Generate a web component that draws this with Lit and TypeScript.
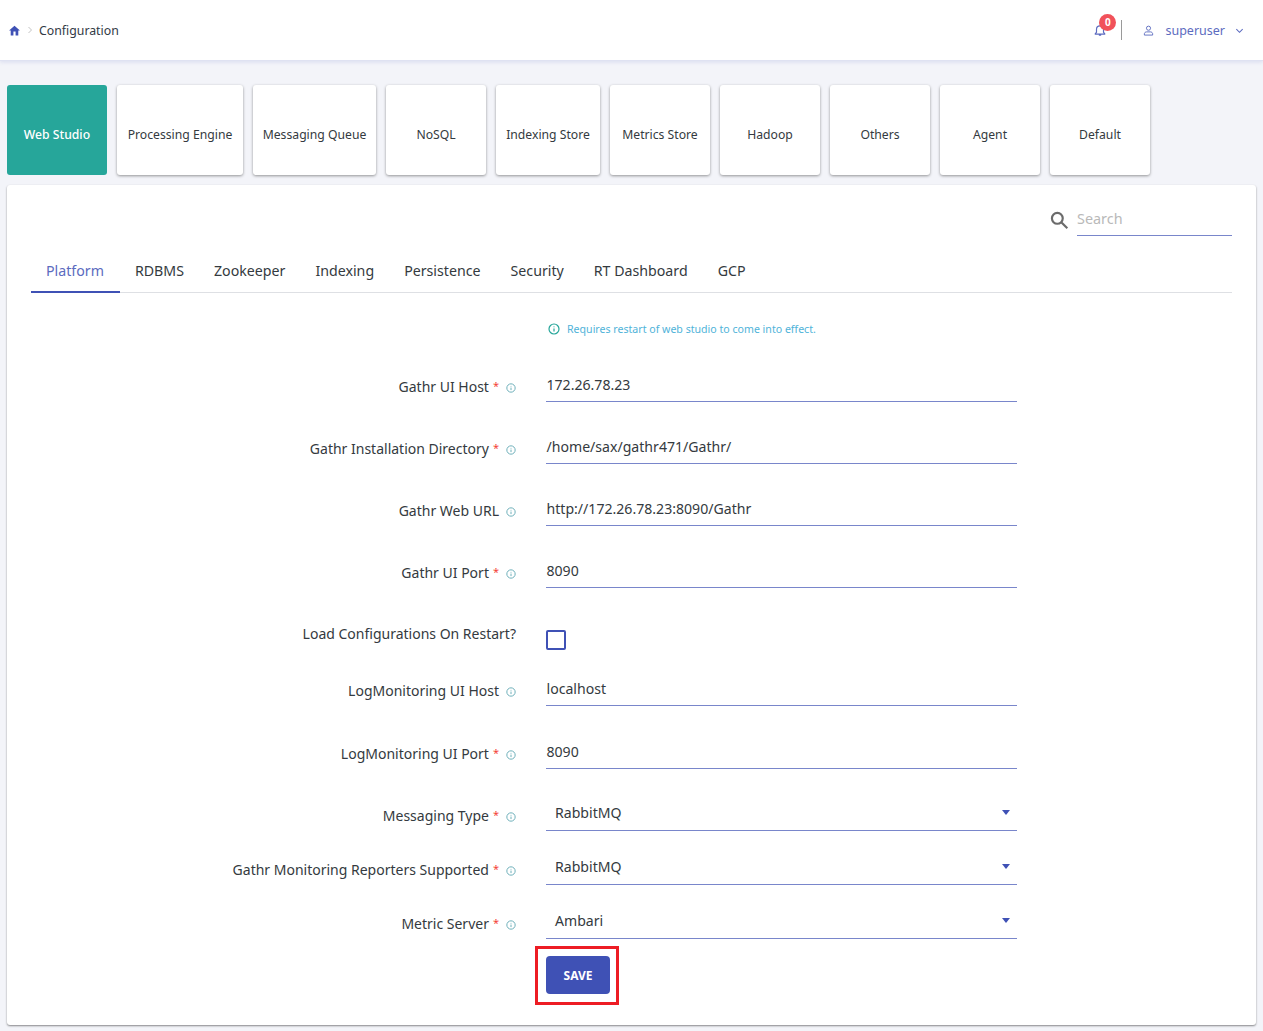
import { LitElement, css, html, nothing } from 'lit';
import { customElement } from 'lit/decorators.js';

const CATEGORIES = ['Web Studio', 'Processing Engine', 'Messaging Queue', 'NoSQL', 'Indexing Store', 'Metrics Store', 'Hadoop', 'Others', 'Agent', 'Default'];
const TABS = ['Platform', 'RDBMS', 'Zookeeper', 'Indexing', 'Persistence', 'Security', 'RT Dashboard', 'GCP'];

type Field = { label: string; value?: string; required?: boolean; kind: 'text' | 'select' | 'check'; info?: boolean };

const FIELDS: Field[] = [
  { label: 'Gathr UI Host', value: '172.26.78.23', required: true, kind: 'text', info: true },
  { label: 'Gathr Installation Directory', value: '/home/sax/gathr471/Gathr/', required: true, kind: 'text', info: true },
  { label: 'Gathr Web URL', value: 'http://172.26.78.23:8090/Gathr', kind: 'text', info: true },
  { label: 'Gathr UI Port', value: '8090', required: true, kind: 'text', info: true },
  { label: 'Load Configurations On Restart?', kind: 'check' },
  { label: 'LogMonitoring UI Host', value: 'localhost', kind: 'text', info: true },
  { label: 'LogMonitoring UI Port', value: '8090', required: true, kind: 'text', info: true },
  { label: 'Messaging Type', value: 'RabbitMQ', required: true, kind: 'select', info: true },
  { label: 'Gathr Monitoring Reporters Supported', value: 'RabbitMQ', required: true, kind: 'select', info: true },
  { label: 'Metric Server', value: 'Ambari', required: true, kind: 'select', info: true },
];

const infoIcon = (size: number) => html`<svg width=${size} height=${size} viewBox="0 0 24 24" fill="none" stroke="currentColor" stroke-width="2.4">
  <circle cx="12" cy="12" r="10"></circle>
  <path d="M12 11v6M12 7v1.6"></path>
</svg>`;

@customElement('app-root')
export class AppRoot extends LitElement {
  static styles = css`
    :host {
      display: block;
      min-height: 1031px;
      background: #f3f4f9;
      font-family: 'Noto Sans', sans-serif;
      color: #343a40;
    }
    header {
      height: 61px;
      box-sizing: border-box;
      background: #fff;
      border-bottom: 1px solid #dfe2f2;
      box-shadow: 0 1px 4px rgba(63, 81, 181, 0.15);
      display: flex;
      align-items: center;
      padding: 0 19px 0 8px;
    }
    .crumbs {
      display: flex;
      align-items: center;
      font-size: 12.3px;
      color: #323a46;
    }
    .home {
      color: #3f51b5;
      display: block;
    }
    .sep {
      color: #c4c4c4;
      display: block;
      margin: 0 6px 0 6px;
    }
    .user {
      margin-left: auto;
      display: flex;
      align-items: center;
      color: #5c6bc0;
      font-size: 12.5px;
    }
    .bell {
      position: relative;
      display: block;
      color: #5c6bc0;
      width: 14px;
      height: 14px;
    }
    .badge {
      position: absolute;
      left: 6px;
      top: -9px;
      width: 17px;
      height: 17px;
      border-radius: 50%;
      background: #f1515a;
      color: #fff;
      font-size: 10px;
      font-weight: 700;
      line-height: 17px;
      text-align: center;
    }
    .divider {
      width: 1px;
      height: 20px;
      background: #9a9a9a;
      margin: 0 21px 0 14px;
    }
    .username {
      margin: 0 10px 0 11px;
    }
    .cats {
      display: grid;
      grid-template-columns: 100px 126px 123px 100px 104px repeat(5, 100px);
      gap: 10px;
      padding: 24px 0 10px 7px;
    }
    .cat {
      height: 90px;
      box-sizing: border-box;
      padding-top: 8px;
      background: #fff;
      border-radius: 3px;
      box-shadow: 0 1px 3px rgba(0, 0, 0, 0.4);
      display: flex;
      align-items: center;
      justify-content: center;
      font-size: 12.2px;
      color: #343a40;
      white-space: nowrap;
    }
    .cat.active {
      background: #26a69a;
      color: #fff;
      box-shadow: none;
      font-weight: 500;
    }
    .panel {
      margin: 0 7px;
      height: 840px;
      box-sizing: border-box;
      background: #fff;
      border-radius: 3px;
      box-shadow: 0 1px 2px rgba(0, 0, 0, 0.45);
      padding: 0 24px;
    }
    .search {
      display: flex;
      justify-content: flex-end;
      align-items: flex-end;
      height: 51px;
      gap: 8px;
    }
    .search svg {
      display: block;
      color: #6b6b6b;
      margin-bottom: 6px;
    }
    .search-box {
      width: 155px;
      height: 34px;
      box-sizing: border-box;
      border-bottom: 1px solid #7986cb;
      color: #b9b9b9;
      font-size: 14.4px;
      line-height: 33px;
    }
    .tabs {
      display: flex;
      margin-top: 15px;
      border-bottom: 1px solid #dee0e4;
    }
    .tab {
      height: 42px;
      box-sizing: border-box;
      padding: 0 15px;
      font-size: 14.2px;
      line-height: 39px;
      color: #343a40;
      white-space: nowrap;
      margin-bottom: -1px;
    }
    .tab.active {
      padding-right: 16px;
      color: #5c6bc0;
      border-bottom: 2px solid #3f51b5;
    }
    .note {
      display: flex;
      align-items: center;
      gap: 7px;
      margin: 27px 0 0 517px;
      height: 18px;
      font-size: 10.6px;
      color: #4fb3d9;
    }
    .note svg {
      display: block;
      color: #26a69a;
    }
    .form {
      margin-top: 2px;
    }
    .row {
      display: grid;
      grid-template-columns: 485px 471px;
      column-gap: 30px;
      align-items: end;
      height: 62px;
    }
    .row.tight {
      height: 54px;
    }
    .row.tall {
      height: 63px;
    }
    .row.check {
      height: 56px;
    }
    .label {
      display: flex;
      justify-content: flex-end;
      align-items: center;
      font-size: 14px;
      color: #343a40;
      white-space: nowrap;
      height: 20px;
      margin-bottom: 6px;
    }
    .req {
      color: #f44336;
      font-size: 11px;
      margin-left: 4px;
      align-self: flex-start;
      line-height: 20px;
    }
    .label svg {
      display: block;
      color: #6fb0ba;
      margin-left: 7px;
      margin-top: 4px;
    }
    .row.check .label {
      margin-bottom: 1px;
    }
    .value {
      height: 32px;
      box-sizing: border-box;
      border-bottom: 1px solid #7986cb;
      font-size: 14.1px;
      line-height: 29px;
      padding-left: 0.5px;
      color: #343a40;
    }
    .value.select {
      padding: 0 7px 4px 9px;
      display: flex;
      justify-content: space-between;
      align-items: center;
      line-height: normal;
    }
    .caret {
      width: 0;
      height: 0;
      border-left: 4px solid transparent;
      border-right: 4px solid transparent;
      border-top: 5px solid #3f51b5;
    }
    .box {
      width: 20px;
      height: 20px;
      box-sizing: border-box;
      border: 2px solid #3f51b5;
      border-radius: 2px;
      margin-bottom: -6px;
    }
    .actions {
      margin: 7px 0 0 504px;
      width: 84px;
      height: 59px;
      box-sizing: border-box;
      border: 3px solid #ed1c24;
      padding: 7px 8px;
    }
    button {
      display: block;
      width: 64px;
      height: 38px;
      padding: 0;
      border: 0;
      border-radius: 4px;
      background: #3f51b5;
      color: #fff;
      font: 700 12px 'Noto Sans', sans-serif;
    }
  `;

  private renderField(f: Field, i: number) {
    const rowClass = f.kind === 'check' ? 'row check' : f.kind === 'select' && i > 7 ? 'row tight' : i === 6 ? 'row tall' : 'row';
    return html`<div class=${rowClass}>
      <div class="label">
        <span>${f.label}</span>
        ${f.required ? html`<span class="req">*</span>` : nothing}
        ${f.info ? infoIcon(10) : nothing}
      </div>
      ${f.kind === 'check'
        ? html`<div class="box"></div>`
        : f.kind === 'select'
          ? html`<div class="value select"><span>${f.value}</span><span class="caret"></span></div>`
          : html`<div class="value">${f.value}</div>`}
    </div>`;
  }

  render() {
    return html`
      <header>
        <div class="crumbs">
          <svg class="home" width="13" height="13" viewBox="0 0 24 24" fill="currentColor"><path d="M10 21v-7h4v7h5v-9h3L12 3 2 12h3v9z"></path></svg>
          <svg class="sep" width="6" height="8" viewBox="0 0 6 8" fill="none" stroke="currentColor"><path d="M1.5 1l3 3-3 3"></path></svg>
          <span>Configuration</span>
        </div>
        <div class="user">
          <span class="bell">
            <svg width="14" height="14" viewBox="0 0 24 24" fill="none" stroke="currentColor" stroke-width="2"><path d="M18 16V11a6 6 0 0 0-12 0v5l-2 2v1h16v-1zM10 21h4"></path></svg>
            <span class="badge">0</span>
          </span>
          <span class="divider"></span>
          <svg width="11" height="11" viewBox="0 0 24 24" fill="none" stroke="currentColor" stroke-width="2"><circle cx="12" cy="7" r="4.5"></circle><path d="M3 22v-3c0-2 2-4 5-4h8c3 0 5 2 5 4v3z"></path></svg>
          <span class="username">superuser</span>
          <svg width="9" height="9" viewBox="0 0 10 10" fill="none" stroke="currentColor" stroke-width="1.2"><path d="M1.5 3.5L5 7l3.5-3.5"></path></svg>
        </div>
      </header>
      <div class="cats">
        ${CATEGORIES.map((c, i) => html`<div class="cat ${i === 0 ? 'active' : ''}">${c}</div>`)}
      </div>
      <div class="panel">
        <div class="search">
          <svg width="20" height="20" viewBox="0 0 24 24" fill="none" stroke="currentColor" stroke-width="2.6"><circle cx="10" cy="10" r="6.5"></circle><path d="M15 15l7 7"></path></svg>
          <div class="search-box">Search</div>
        </div>
        <div class="tabs">
          ${TABS.map((t, i) => html`<div class="tab ${i === 0 ? 'active' : ''}">${t}</div>`)}
        </div>
        <div class="note">${infoIcon(12)}<span>Requires restart of web studio to come into effect.</span></div>
        <div class="form">${FIELDS.map((f, i) => this.renderField(f, i))}</div>
        <div class="actions"><button>SAVE</button></div>
      </div>
    `;
  }
}
